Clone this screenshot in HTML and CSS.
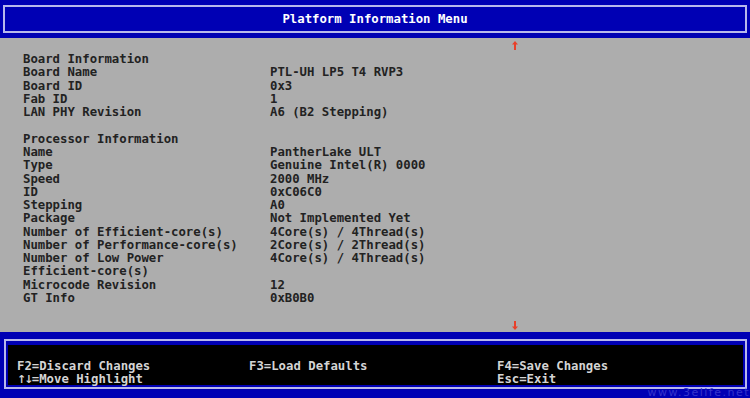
FILE: index.html
```html
<!DOCTYPE html>
<html lang="en">
<head>
    <meta charset="UTF-8">
    <meta name="viewport" content="width=device-width, initial-scale=1.0">
    <title>Platform Information Menu</title>
    <link rel="stylesheet" href="styles.css">
</head>
<body>
    <div class="screen">
        <div class="header">
            <div class="title-box">Platform Information Menu</div>
        </div>

        <div class="main">
            <div class="scroll-mark top">
                <svg width="6" height="9" viewBox="0 0 6 9"><path d="M3 0 L6 3.5 L4 3.5 L4 9 L2 9 L2 3.5 L0 3.5 Z" fill="#e8402a"/></svg>
            </div>

            <div class="rows">
                <div class="row head"><span>Board Information</span></div>
                <div class="row"><span>Board Name</span><span>PTL-UH LP5 T4 RVP3</span></div>
                <div class="row"><span>Board ID</span><span>0x3</span></div>
                <div class="row"><span>Fab ID</span><span>1</span></div>
                <div class="row"><span>LAN PHY Revision</span><span>A6 (B2 Stepping)</span></div>
                <div class="row blank"></div>
                <div class="row head"><span>Processor Information</span></div>
                <div class="row"><span>Name</span><span>PantherLake ULT</span></div>
                <div class="row"><span>Type</span><span>Genuine Intel(R) 0000</span></div>
                <div class="row"><span>Speed</span><span>2000 MHz</span></div>
                <div class="row"><span>ID</span><span>0xC06C0</span></div>
                <div class="row"><span>Stepping</span><span>A0</span></div>
                <div class="row"><span>Package</span><span>Not Implemented Yet</span></div>
                <div class="row"><span>Number of Efficient-core(s)</span><span>4Core(s) / 4Thread(s)</span></div>
                <div class="row"><span>Number of Performance-core(s)</span><span>2Core(s) / 2Thread(s)</span></div>
                <div class="row"><span>Number of Low Power<br>Efficient-core(s)</span><span>4Core(s) / 4Thread(s)</span></div>
                <div class="row"><span>Microcode Revision</span><span>12</span></div>
                <div class="row"><span>GT Info</span><span>0xB0B0</span></div>
            </div>

            <div class="scroll-mark">
                <svg width="6" height="9" viewBox="0 0 6 9"><path d="M3 9 L6 5.5 L4 5.5 L4 0 L2 0 L2 5.5 L0 5.5 Z" fill="#e8402a"/></svg>
            </div>
        </div>

        <div class="footer">
            <div class="help-box">
                <div class="help">
                    <div class="help-col">
                        <span>F2=Discard Changes</span>
                        <span><span class="keys">&uarr;&darr;</span>=Move Highlight</span>
                    </div>
                    <div class="help-col">
                        <span>F3=Load Defaults</span>
                    </div>
                    <div class="help-col">
                        <span>F4=Save Changes</span>
                        <span>Esc=Exit</span>
                    </div>
                </div>
            </div>
            <div class="watermark">www.3elife.net</div>
        </div>
    </div>
</body>
</html>
```

FILE: styles.css
```css
body {
    margin: 0;
    padding: 0;
    background-color: #0000b0;
    font-family: "DejaVu Sans Mono", "Liberation Mono", monospace;
    font-weight: bold;
    font-size: 12.3px;
}
.screen {
    width: 750px;
    height: 398px;
    display: flex;
    flex-direction: column;
    overflow: hidden;
}
.header {
    height: 38px;
    box-sizing: border-box;
    padding: 5px 3px 5px 3px;
    background-color: #0000b4;
}
.title-box {
    height: 28px;
    box-sizing: border-box;
    border: 2px solid #b8b8ec;
    color: #ffffff;
    display: flex;
    align-items: center;
    justify-content: center;
}
.main {
    height: 294px;
    background-color: #adadad;
    color: #222222;
    display: flex;
    flex-direction: column;
}
.scroll-mark {
    height: 14px;
    padding-left: 512px;
    display: flex;
    align-items: center;
}
.scroll-mark.top {
    height: 15px;
}
.rows {
    flex: 1;
    padding-left: 23px;
}
.row {
    display: grid;
    grid-template-columns: 247px 1fr;
    line-height: 13.28px;
    white-space: nowrap;
}
.blank {
    height: 13.28px;
}
.footer {
    position: relative;
    flex: 1;
    box-sizing: border-box;
    padding: 7px 3px 9px 4px;
    background-color: #0000b4;
}
.help-box {
    height: 50px;
    box-sizing: border-box;
    border: 2px solid #b8b8ec;
    padding: 4px 2px 2px 2px;
}
.help {
    height: 40px;
    box-sizing: border-box;
    background-color: #000000;
    color: #d4d4d4;
    padding: 15px 0 0 9px;
    display: grid;
    grid-template-columns: 232px 248px 1fr;
}
.help-col {
    display: flex;
    flex-direction: column;
    line-height: 13.28px;
    white-space: nowrap;
}
.keys {
    display: inline-block;
    width: 14.8px;
    font-family: "DejaVu Sans", sans-serif;
    font-size: 11px;
    letter-spacing: -2px;
}
.watermark {
    position: absolute;
    right: 0;
    bottom: 0;
    font-size: 11px;
    letter-spacing: 1.5px;
    line-height: 11px;
    color: #3434cc;
    font-family: "DejaVu Sans", sans-serif;
    font-weight: normal;
}
```
